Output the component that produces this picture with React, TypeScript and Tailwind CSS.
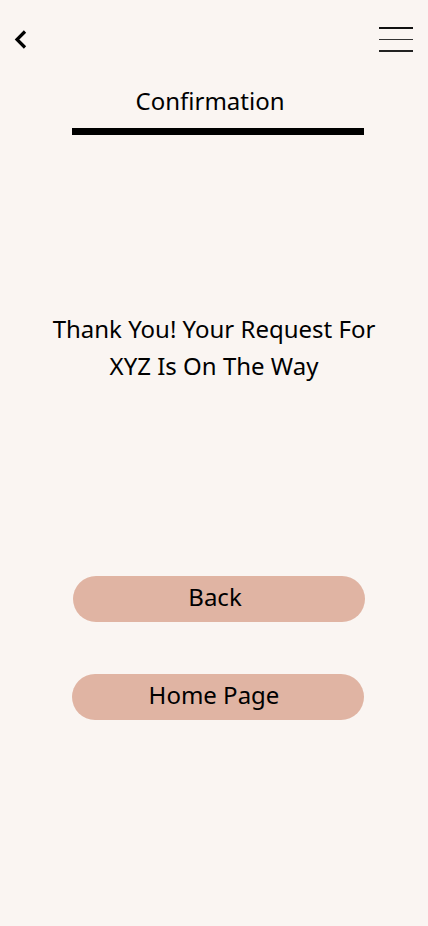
export default function App() {
  return (
    <div className="min-h-[926px] w-full bg-[#faf5f2] text-black font-['Noto_Sans',sans-serif] flex flex-col">
      {/* Top bar */}
      <div className="flex items-start justify-between pl-[13px] pt-[27px] pr-[15px]">
        <button className="mt-[2px]" aria-label="back">
          <svg width="14" height="21" viewBox="0 0 14 21" fill="none">
            <path d="M12 2.5 L4 10.5 L12 18.5" stroke="#000" strokeWidth="3.2" />
          </svg>
        </button>
        <button className="flex flex-col gap-[10px] w-[34px]" aria-label="menu">
          <span className="block h-[1.5px] w-full bg-[#111]"></span>
          <span className="block h-[1.5px] w-full bg-[#333]"></span>
          <span className="block h-[1.5px] w-full bg-[#222]"></span>
        </button>
      </div>

      {/* Title */}
      <div className="flex flex-col items-center mt-[34px]">
        <h1 className="text-[24px] leading-[30px] -translate-x-[4px]">Confirmation</h1>
        <div className="mt-[12px] h-[7px] w-[292px] bg-black translate-x-[4px]"></div>
      </div>

      {/* Message */}
      <p className="mt-[175px] text-center text-[24px] leading-[37px] px-[30px]">
        Thank You! Your Request For
        <br />
        XYZ Is On The Way
      </p>

      {/* Buttons */}
      <div className="flex flex-col items-center gap-[52px] mt-[192px]">
        <button className="w-[292px] h-[46px] rounded-full bg-[#e0b4a3] text-[24px] pr-[8px] pb-[3px] translate-x-[5px]">
          Back
        </button>
        <button className="w-[292px] h-[46px] rounded-full bg-[#e0b4a3] text-[24px] pr-[8px] pb-[3px] translate-x-[4px]">
          Home Page
        </button>
      </div>
    </div>
  );
}
